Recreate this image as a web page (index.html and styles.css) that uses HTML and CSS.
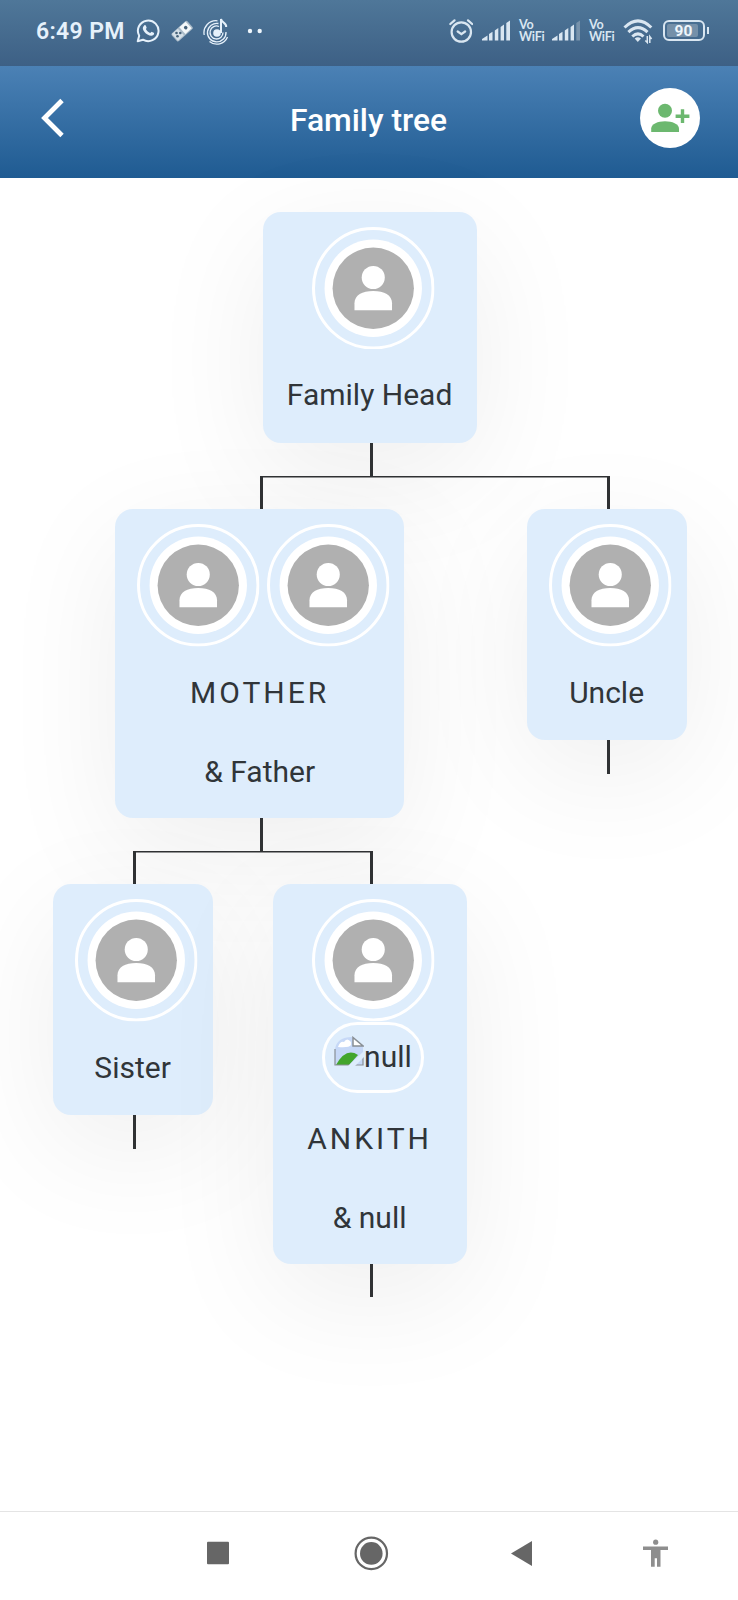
FILE: index.html
```html
<!DOCTYPE html>
<html lang="en">
<head>
<meta charset="utf-8">
<title>Family tree</title>
<link rel="stylesheet" href="styles.css">
</head>
<body>
<svg class="defs" width="0" height="0">
  <symbol id="avatar" viewBox="0 0 122 122">
    <circle cx="61" cy="61" r="59.5" fill="none" stroke="#fff" stroke-width="3"/>
    <circle cx="61" cy="61" r="48.5" fill="#fff"/>
    <circle cx="61" cy="61" r="40.5" fill="#b0b0b0"/>
    <circle cx="61" cy="50.3" r="11.5" fill="#fff"/>
    <path d="M42.3 83V76C42.3 68 50 63.8 61 63.8S79.7 68 79.7 76V83Z" fill="#fff"/>
  </symbol>
</svg>

<div class="status">
  <span class="time">6:49 PM</span>
  <svg class="whatsapp" width="24" height="26" viewBox="0 0 24 26"><path d="M1.7 23.2 3.2 17.8A10.3 10.3 0 1 1 7 21.7Z" fill="none" stroke="#e6f1fb" stroke-width="2" stroke-linejoin="round"/><path d="M8.2 7.4c.8-.6 1.4-.3 1.7.4l.7 1.7c.2.6-.9 1.3-.6 1.8 1 1.8 2.3 2.9 4.1 3.7.6.2 1.2-1.4 1.9-1.1l1.8.9c.6.4.3 1.6-.4 2.2-1.4 1.3-3.6.9-5.900-.4-2.300-1.400-4.200-3.700-4.600-5.700-.2-1.300.3-2.800 1.300-3.500Z" fill="#e6f1fb"/></svg>
  <svg class="game" width="24" height="26" viewBox="0 0 24 26"><g transform="rotate(-42 12 13)"><rect x="1.5" y="8" width="21" height="10.500" rx="1.5" fill="#a9bac8"/><rect x="2.500" y="8.500" width="8" height="9" fill="#d5e0e8"/><rect x="12.500" y="8.500" width="8.500" height="9" fill="#f4f8fa"/><circle cx="17" cy="13" r="1.800" fill="#46627a"/></g><circle cx="6.500" cy="15" r="1.300" fill="#46627a"/><circle cx="10.300" cy="15" r="1.300" fill="#46627a"/><circle cx="7.500" cy="18.300" r="1.300" fill="#46627a"/></svg>
  <svg class="music" width="26" height="27" viewBox="0 0 26 27"><g fill="none" stroke="#e6f1fb" stroke-width="1.3"><path d="M16 8.500A6.500 6.500 0 1 0 20 14.500"/><path d="M15.500 5.500A9.300 9.300 0 1 0 23 14"/><path d="M1.200 17A12 12 0 0 1 14.500 2.800"/><path d="M6.500 23.500A11.500 11.500 0 0 0 24.500 19"/></g><circle cx="14" cy="15" r="3.800" fill="#e6f1fb"/><path d="M18 15V1c.6 4 5.600 3.500 5.200 8" fill="none" stroke="#e6f1fb" stroke-width="2"/></svg>
  <svg class="dots" width="16" height="26" viewBox="0 0 16 26"><circle cx="3" cy="13" r="2.2" fill="#eef6fc"/><circle cx="12.7" cy="13" r="2.2" fill="#eef6fc"/></svg>

  <svg class="alarm" width="24" height="26" viewBox="0 0 24 26"><g fill="none" stroke="#d9e6f1" stroke-width="2.200" stroke-linecap="round"><circle cx="12.3" cy="14" r="9.7"/><path d="M1.3 6 5.5 2.3M19 2.3 23.2 6M8.700 13.500l3.700 2.600 3.700-2.600"/></g></svg>
  <svg class="signal" width="28" height="26" viewBox="0 0 28 26"><path d="M0 22.5V21L5.5 17.500V22.5ZM7 22.5V16L10.5 13.7V22.5ZM12.800 22.5V12.500L16.300 10V22.5ZM18.600 22.5V9L22 6.5V22.5ZM24.300 22.5V5L28 2.5V22.5Z" fill="#d9e6f1"/></svg>
  <div class="vo">Vo<br>WiFi</div>
  <svg class="signal2" width="28" height="26" viewBox="0 0 28 26"><path d="M0 22.5V21L5.5 17.500V22.5ZM7 22.5V16L10.5 13.7V22.5ZM12.800 22.5V12.500L16.300 10V22.5ZM18.600 22.5V9L22 6.5V22.5Z" fill="#d9e6f1"/><path d="M24.3 22.5V5L28 2.5V22.5Z" fill="#7893ac"/></svg>
  <div class="vo">Vo<br>WiFi</div>
  <svg class="wifi" width="30" height="26" viewBox="0 0 30 26"><g fill="none" stroke="#d9e6f1" stroke-width="3"><path d="M1.5 9.5Q15-3.8 28.3 9.5"/><path d="M5.4 14.2Q15 5 24.5 14.2"/><path d="M9.3 18.5Q15 13.2 20.5 18.5"/></g><path d="M11.7 20.5Q14.8 18 18 20.5L14.8 24Z" fill="#d9e6f1"/><path d="M24.300 18V24.500L22.300 22.500M26.800 25V18.500L28.600 21" stroke="#d9e6f1" stroke-width="1.500" fill="none"/></svg>
  <div class="battery"><span>90</span></div>
  <i class="nub"></i>
</div>

<div class="header">
  <svg class="back" width="24" height="40" viewBox="0 0 24 40"><path d="M21 2.5 3.5 20 21 37.5" fill="none" stroke="#fff" stroke-width="4.800"/></svg>
  <h1 class="title">Family tree</h1>
  <svg class="add" width="60" height="60" viewBox="0 0 60 60"><circle cx="30" cy="30" r="30" fill="#fff"/><g fill="#6cb86f"><circle cx="25" cy="22.8" r="7"/><path d="M11.2 44V40.5C11.2 36 18 33.2 25 33.2S39 36 39 40.5V44Z"/><path d="M40.8 21.3h3.400v5.300h5.200v3.400h-5.200v5h-3.400v-5h-5.200v-3.400h5.200Z"/></g></svg>
</div>

<div class="canvas">
  <ul class="tree">
    <li class="node">
      <div class="card head">
        <div class="faces"><svg class="face"><use href="#avatar"/></svg></div>
        <p class="name">Family Head</p>
      </div>
      <i class="stem"></i>
      <ul class="children">
        <li class="node">
          <div class="joint first"><i></i><i></i></div>
          <div class="card couple">
            <div class="faces"><svg class="face"><use href="#avatar"/></svg><svg class="face"><use href="#avatar"/></svg></div>
            <p class="name caps">MOTHER</p>
            <p class="name">&amp; Father</p>
          </div>
          <i class="stem"></i>
          <ul class="children">
            <li class="node">
              <div class="joint first"><i></i><i></i></div>
              <div class="card">
                <div class="faces"><svg class="face"><use href="#avatar"/></svg></div>
                <p class="name">Sister</p>
              </div>
              <i class="stem"></i>
            </li>
            <li class="node">
              <div class="joint last"><i></i><i></i></div>
              <div class="card self">
                <div class="faces"><svg class="face"><use href="#avatar"/></svg></div>
                <div class="missing">
                  <svg width="30" height="30" viewBox="0 0 30 30"><path d="M1 29V13Q3 1 18 1L29 10V29Z" fill="#c6d8f7"/><path d="M4 11Q6 5 10 6 13 1 17 6V9Q15 12 4 11Z" fill="#fff"/><path d="M2 29Q12 11 24 19L15 29Z" fill="#42a52c"/><path d="M1 13V29H29V18" fill="none" stroke="#898f95" stroke-width="1.2"/><path d="M19 1.5V10H29Z" fill="#fff" stroke="#898f95" stroke-width="1.5"/><path d="M13 31 30 15V21L20 31Z" fill="#deedfc"/></svg><span>null</span>
                </div>
                <p class="name caps">ANKITH</p>
                <p class="name">&amp; null</p>
              </div>
              <i class="stem"></i>
            </li>
          </ul>
        </li>
        <li class="node">
          <div class="joint last"><i></i><i></i></div>
          <div class="card">
            <div class="faces"><svg class="face"><use href="#avatar"/></svg></div>
            <p class="name">Uncle</p>
          </div>
          <i class="stem"></i>
        </li>
      </ul>
    </li>
  </ul>
</div>

<div class="nav">
  <svg width="738" height="87" viewBox="0 1512.300 738 87"><rect x="207" y="1542" width="22" height="22.5" rx="1" fill="#666"/><circle cx="371.3" cy="1553.7" r="15.700" fill="none" stroke="#666" stroke-width="2.2"/><circle cx="371.3" cy="1553.7" r="11.3" fill="#666"/><path d="M511 1553.7 532 1541.3V1566.3Z" fill="#666"/><g fill="#8e8e8e"><circle cx="655.7" cy="1542.5" r="2.6"/><path d="M643 1546.7H668V1550.3H660.5V1567H657V1558.5H654.7V1567H651V1550.3H643Z"/></g></svg>
</div>
</body>
</html>
```
FILE: styles.css
```css
* { box-sizing: border-box; }
body {
  margin: 0;
  width: 738px;
  height: 1600px;
  display: flex;
  flex-direction: column;
  overflow: hidden;
  background: #fff;
  font-family: Roboto, "Liberation Sans", sans-serif;
}
.defs { position: absolute; }
svg { display: block; flex: none; }
ul, p, h1 { margin: 0; padding: 0; }
ul { list-style: none; }
i { display: block; }

.status {
  flex: none;
  height: 66px;
  display: flex;
  align-items: flex-start;
  padding: 18px 0 0 36px;
  background: linear-gradient(#4f7799, #3d6085);
}
.time {
  width: 99px;
  font-size: 23px;
  line-height: 27px;
  font-weight: 600;
  letter-spacing: .35px;
  color: #e6f1fb;
  white-space: nowrap;
}
.whatsapp { margin-left: 1px; }
.game { margin-left: 10px; }
.music { margin-left: 9px; }
.dots { margin-left: 18px; }
.alarm { margin-left: 186px; }
.signal { margin-left: 9px; }
.signal2 { margin-left: 7px; }
.vo {
  width: 26px;
  margin-left: 9px;
  padding-top: 1px;
  font: 700 12.5px/12px Lato, sans-serif;
  letter-spacing: -.2px;
  color: #d9e6f1;
}
.wifi { margin-left: 8px; }
.battery {
  width: 42px;
  height: 21px;
  margin: 2px 0 0 9.5px;
  padding: 2px;
  border: 2px solid #d9e6f1;
  border-radius: 6px;
}
.battery span {
  display: block;
  height: 13px;
  width: 31px;
  border-radius: 2px;
  background: #7590a9;
  color: #eef6fc;
  font-size: 15.5px;
  font-weight: 700;
  line-height: 14px;
  text-align: center;
  padding-left: 3px;
}
.nub { width: 2px; height: 7px; margin: 9px 0 0 2px; background: #d9e6f1; }

.header {
  flex: none;
  height: 112px;
  display: grid;
  grid-template-columns: 1fr auto 1fr;
  align-items: center;
  padding: 0 38px 7.5px 41px;
  background: linear-gradient(#4b81b5, #1f5b92);
}
.title {
  padding-top: 3px;
  font-size: 31.8px;
  line-height: 36px;
  font-weight: 500;
  color: #fff;
}
.title { translate: -2px 0; }
.add { justify-self: end; }

.canvas { flex: 1; min-height: 0; padding: 33.5px 0 0 22.6px; }
.tree { width: 694px; }
.children { display: flex; width: max-content; }
.node { display: flex; flex-direction: column; align-items: center; padding: 0 30px; }
.children > .node { flex: none; }
.node > .children { margin: 0 -30px; }
.tree > .node { padding: 0; }
.tree > .node > .children { margin: 0; }

.stem { width: 3px; height: 33.5px; margin-left: 3px; background: #303234; }
.joint { display: flex; align-self: stretch; height: 33px; margin: 0 -30px; }
.joint i { width: 50%; }
.joint i:last-child { border-left: 3px solid #303234; }
.first i:last-child, .last i:first-child {
  background: linear-gradient(#303234, #303234) top / 100% 1.5px no-repeat;
}

.card {
  width: 160px;
  padding: 15px 0 8.5px;
  border-radius: 18px;
  background: #deedfc;
  box-shadow: 0 32px 120px rgba(0, 0, 0, .07);
}
.head { width: 214.2px; }
.couple { width: 289.5px; padding-bottom: 7px; }
.self { width: 194px; padding-bottom: 7px; }
.faces { display: flex; justify-content: center; gap: 7.5px; padding-left: 7.5px; margin-bottom: 6px; }
.face { width: 122.5px; height: 122.5px; }
.name { font-size: 30px; line-height: 79px; height: 79px; text-align: center; color: #303539; white-space: nowrap; }
.caps { letter-spacing: 3px; }
.self .faces { margin-bottom: 0; }
.missing {
  width: 102px;
  height: 71px;
  margin: 0 auto 6px 49.5px;
  padding: 11px 0 0 9px;
  display: flex;
  border: 3px solid #fff;
  border-radius: 36px;
  font-size: 30px;
  line-height: 41px;
  color: #303539;
}

.nav { flex: none; height: 89px; border-top: 1.5px solid #e4e4e4; background: #fff; }
```
